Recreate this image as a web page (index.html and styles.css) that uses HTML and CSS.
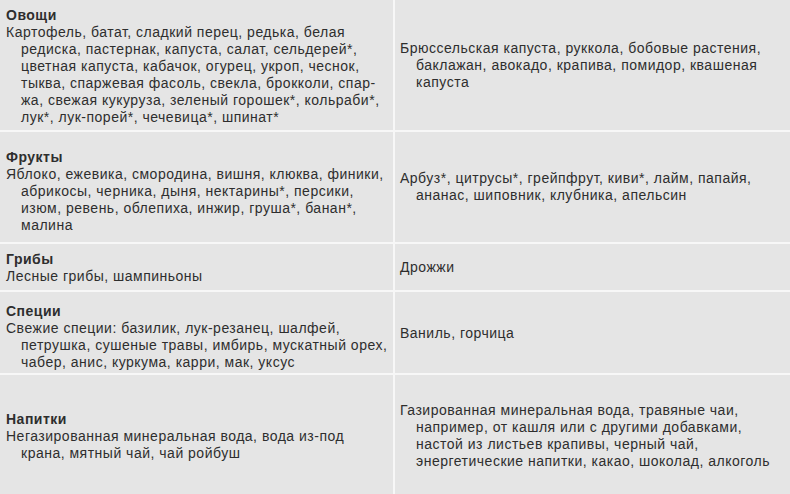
FILE: index.html
```html
<!DOCTYPE html>
<html lang="ru">
<head>
<meta charset="utf-8">
<link rel="stylesheet" href="styles.css">
</head>
<body>
<div class="table">
  <div class="cell left shift-1">
    <div class="head">Овощи</div>
    <div class="item">Картофель, батат, сладкий перец, редька, белая<br>редиска, пастернак, капуста, салат, сельдерей*,<br>цветная капуста, кабачок, огурец, укроп, чеснок,<br>тыква, спаржевая фасоль, свекла, брокколи, спар-<br>жа, свежая кукуруза, зеленый горошек*, кольраби*,<br>лук*, лук-порей*, чечевица*, шпинат*</div>
  </div>
  <div class="cell right">
    <div class="item">Брюссельская капуста, руккола, бобовые растения,<br>баклажан, авокадо, крапива, помидор, квашеная<br>капуста</div>
  </div>

  <div class="cell left shift-4">
    <div class="head">Фрукты</div>
    <div class="item">Яблоко, ежевика, смородина, вишня, клюква, финики,<br>абрикосы, черника, дыня, нектарины*, персики,<br>изюм, ревень, облепиха, инжир, груша*, банан*,<br>малина</div>
  </div>
  <div class="cell right">
    <div class="item">Арбуз*, цитрусы*, грейпфрут, киви*, лайм, папайя,<br>ананас, шиповник, клубника, апельсин</div>
  </div>

  <div class="cell left shift-1">
    <div class="head">Грибы</div>
    <div class="item">Лесные грибы, шампиньоны</div>
  </div>
  <div class="cell right">
    <div class="item">Дрожжи</div>
  </div>

  <div class="cell left shift-4">
    <div class="head">Специи</div>
    <div class="item">Свежие специи: базилик, лук-резанец, шалфей,<br>петрушка, сушеные травы, имбирь, мускатный орех,<br>чабер, анис, куркума, карри, мак, уксус</div>
  </div>
  <div class="cell right shift-1">
    <div class="item">Ваниль, горчица</div>
  </div>

  <div class="cell left">
    <div class="head">Напитки</div>
    <div class="item">Негазированная минеральная вода, вода из-под<br>крана, мятный чай, чай ройбуш</div>
  </div>
  <div class="cell right">
    <div class="item">Газированная минеральная вода, травяные чаи,<br>например, от кашля или с другими добавками,<br>настой из листьев крапивы, черный чай,<br>энергетические напитки, какао, шоколад, алкоголь</div>
  </div>
</div>
</body>
</html>
```

FILE: styles.css
```css
html, body {
  margin: 0;
  padding: 0;
  background: #e5e5e5;
}
body {
  width: 790px;
  height: 494px;
  overflow: hidden;
  font-family: "Liberation Sans", Arial, sans-serif;
  font-size: 14px;
  letter-spacing: 0.5px;
  line-height: 17px;
  color: #2e2e2e;
}
.table {
  display: grid;
  grid-template-columns: 393px 395px;
  grid-template-rows: 130px 110px 46px 81px 122px;
  column-gap: 2px;
  row-gap: 2px;
  background: #f7f7f7;
}
.cell {
  background: #e5e5e5;
  display: flex;
  flex-direction: column;
  justify-content: center;
  white-space: nowrap;
}
.left {
  padding: 0 4px 0 6px;
}
.right {
  padding: 0 4px 0 5px;
}
.shift-1 {
  padding-top: 2px;
}
.shift-4 {
  padding-top: 8px;
}
.head {
  font-weight: bold;
}
.item {
  padding-left: 15px;
  text-indent: -15px;
}
.right .item {
  padding-left: 16px;
  text-indent: -16px;
}
```
